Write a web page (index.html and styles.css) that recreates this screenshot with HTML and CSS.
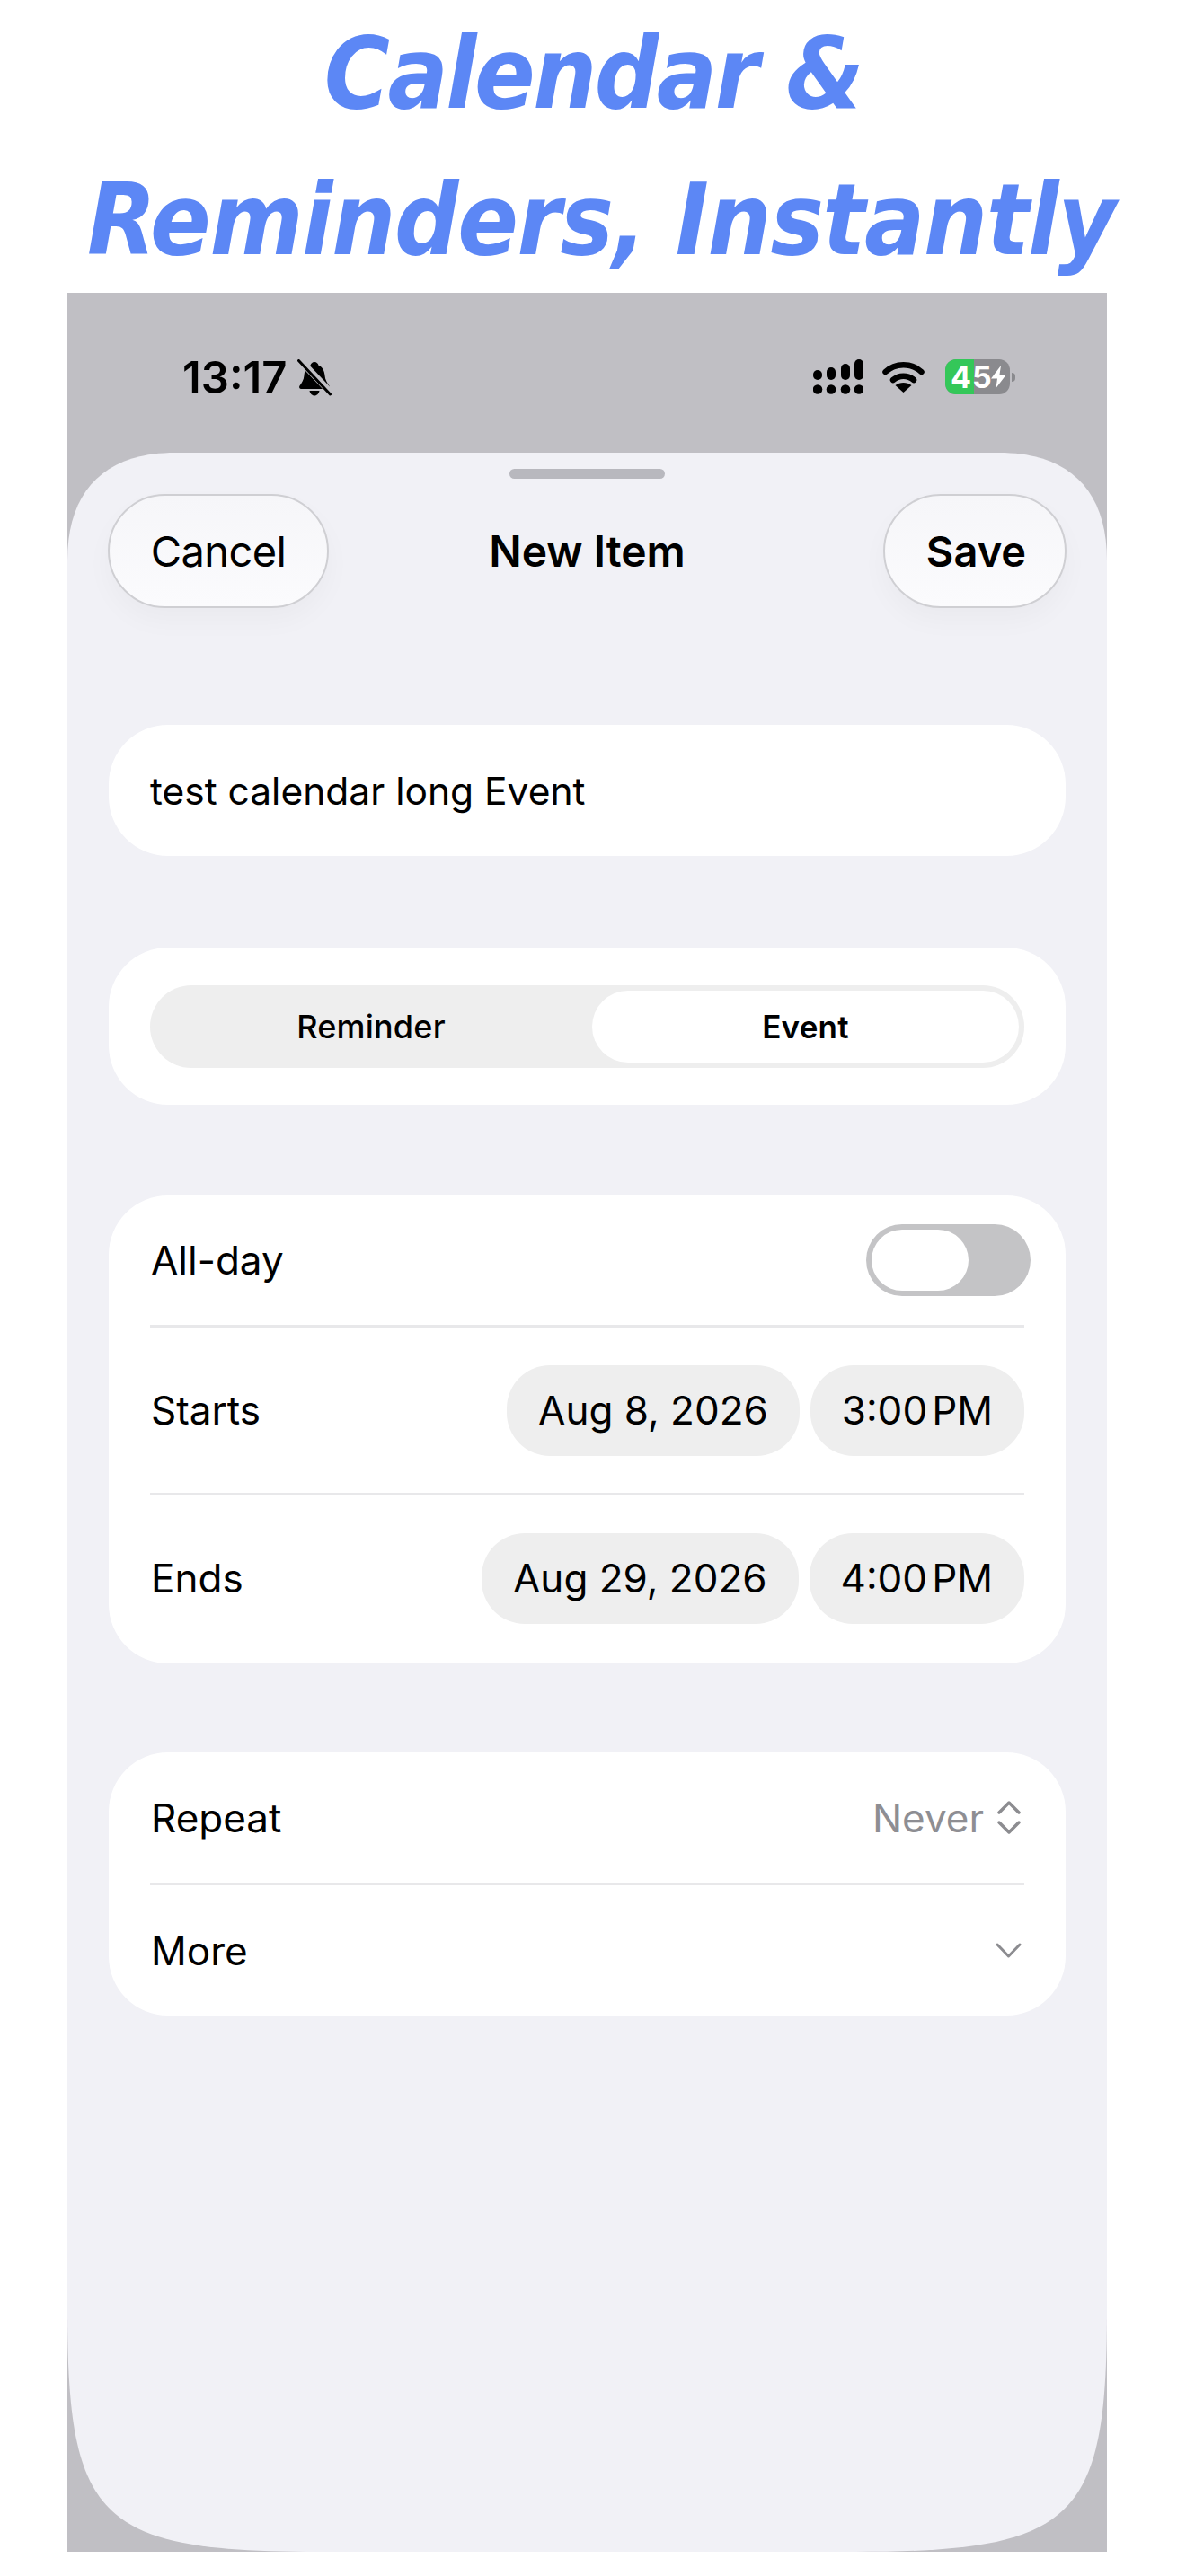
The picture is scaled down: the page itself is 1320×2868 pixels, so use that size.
FILE: index.html
```html
<!DOCTYPE html>
<html lang="en">
<head>
    <meta charset="UTF-8">
    <meta name="viewport" content="width=device-width, initial-scale=1.0">
    <title>Calendar &amp; Reminders, Instantly</title>
    <link rel="stylesheet" href="styles.css">
</head>
<body>

<h1 class="headline"><span class="headline-first">Calendar &amp;</span><br><span class="headline-second">Reminders, Instantly</span></h1>

<div class="phone">
    <div class="status-bar">
        <div class="status-left">
            <span class="status-time">13:17</span>
            <svg class="icon-bell" viewBox="0 0 38 41">
                <path d="M19 3c2.500 0 4 1.800 4.500 3.800C28 8.500 30 13 30.500 18c.4 5 2.500 8 5 11.500 1 1.500.3 3.500-1.800 3.500H4.300c-2.100 0-2.800-2-1.800-3.500C5 26 7.100 23 7.500 18 8 13 10 8.500 14.500 6.800 15 4.800 16.500 3 19 3z" fill="#000"/>
                <path d="M13.500 35h11c-.5 3-2.800 5.500-5.500 5.500s-5-2.500-5.500-5.500z" fill="#000"/>
                <path d="M1 -1L38 38" stroke="#c0bfc4" stroke-width="7.500"/>
                <path d="M1.500 1.500L36.500 39" stroke="#000" stroke-width="3" stroke-linecap="round"/>
            </svg>
        </div>
        <div class="status-right">
            <svg class="icon-signal" viewBox="0 0 56 39">
                <rect x="0" y="12" width="10" height="11" rx="5"/>
                <rect x="15" y="9" width="10" height="14" rx="5"/>
                <rect x="31" y="5" width="10" height="18" rx="5"/>
                <rect x="46" y="0" width="10" height="23" rx="5"/>
                <circle cx="5" cy="33.500" r="5.300"/>
                <circle cx="20" cy="33.500" r="5.300"/>
                <circle cx="36" cy="33.500" r="5.300"/>
                <circle cx="51" cy="33.500" r="5.300"/>
            </svg>
            <svg class="icon-wifi" viewBox="0 0 47 35">
                <path d="M3.500 12C14.500 1.500 32.500 1.500 43.500 12" fill="none" stroke="#000" stroke-width="6.500" stroke-linecap="round"/>
                <path d="M12 21c6.500-5.800 16.500-5.800 23 0" fill="none" stroke="#000" stroke-width="6.500" stroke-linecap="round"/>
                <path d="M23.500 35L14.500 27c5-4 13-4 18 0z" fill="#000"/>
            </svg>
            <div class="battery">
                <div class="battery-body">
                    <span class="battery-level"></span>
                    <span class="battery-text">45</span>
                    <svg class="icon-bolt" viewBox="0 0 17 25">
                        <path d="M11 0L0 14.500h7L5.500 25 17 10H9.500z" fill="#fff"/>
                    </svg>
                </div>
                <span class="battery-nub"></span>
            </div>
        </div>
    </div>

    <div class="sheet">
        <div class="grabber"></div>

        <div class="nav">
            <button class="nav-btn nav-cancel">Cancel</button>
            <div class="nav-title">New Item</div>
            <button class="nav-btn nav-save">Save</button>
        </div>

        <div class="card title-field">test calendar long Event</div>

        <div class="card segment-card">
            <div class="segment">
                <div class="segment-item">Reminder</div>
                <div class="segment-item segment-active">Event</div>
            </div>
        </div>

        <div class="card dates-card">
            <div class="row row-allday">
                <span>All-day</span>
                <div class="toggle"><div class="toggle-knob"></div></div>
            </div>
            <div class="divider"></div>
            <div class="row row-date">
                <span>Starts</span>
                <div class="chips">
                    <span class="chip">Aug 8, 2026</span>
                    <span class="chip">3:00<span class="thin-gap"></span>PM</span>
                </div>
            </div>
            <div class="divider"></div>
            <div class="row row-date">
                <span>Ends</span>
                <div class="chips">
                    <span class="chip">Aug 29, 2026</span>
                    <span class="chip">4:00<span class="thin-gap"></span>PM</span>
                </div>
            </div>
        </div>

        <div class="card options-card">
            <div class="row row-repeat">
                <span>Repeat</span>
                <div class="row-value">
                    <span>Never</span>
                    <svg class="icon-updown" viewBox="0 0 26 37">
                        <path d="M2 13L13 2l11 11M2 24l11 11 11-11" fill="none" stroke="#8c8c90" stroke-width="3.500" stroke-linecap="round" stroke-linejoin="round"/>
                    </svg>
                </div>
            </div>
            <div class="divider"></div>
            <div class="row row-more">
                <span>More</span>
                <svg class="icon-chevron" viewBox="0 0 29 17">
                    <path d="M2 2l12.500 13L27 2" fill="none" stroke="#8c8c90" stroke-width="3" stroke-linecap="round" stroke-linejoin="round"/>
                </svg>
            </div>
        </div>
    </div>
</div>

</body>
</html>
```
FILE: styles.css
```css
* {
    box-sizing: border-box;
}

body {
    margin: 0;
    background-color: #ffffff;
    font-family: 'Inter', 'Liberation Sans', sans-serif;
    color: #000;
}

.headline {
    margin: 0;
    height: 326px;
    text-align: center;
    font-family: 'DejaVu Sans', sans-serif;
    font-stretch: condensed;
    font-style: italic;
    font-weight: bold;
    font-size: 111px;
    letter-spacing: -1.300px;
    line-height: 163px;
    color: #5c87f5;
}

.headline-first {
    letter-spacing: -2.500px;
}

.headline-second {
    position: relative;
    left: 9px;
}

.phone {
    width: 1157px;
    height: 2515px;
    margin-left: 75px;
    background-color: #c0bfc4;
    display: flex;
    flex-direction: column;
}

.status-bar {
    height: 178px;
    flex-shrink: 0;
    padding: 74px 102px 0 128px;
    display: flex;
    justify-content: space-between;
    align-items: flex-start;
}

.status-left {
    display: flex;
    align-items: center;
    gap: 12px;
    height: 41px;
}

.status-time {
    font-size: 49px;
    font-weight: 600;
}

.icon-bell {
    width: 38px;
    height: 41px;
}

.status-right {
    display: flex;
    align-items: center;
    height: 39px;
}

.icon-signal {
    width: 56px;
    height: 39px;
    margin-right: 21px;
}

.icon-wifi {
    width: 47px;
    height: 35px;
    margin-right: 23px;
}

.battery {
    display: flex;
    align-items: center;
    gap: 2px;
}

.battery-body {
    position: relative;
    width: 72px;
    height: 39px;
    border-radius: 12px;
    background-color: #8a8a8e;
    overflow: hidden;
}

.battery-level {
    position: absolute;
    left: 0;
    top: 0;
    bottom: 0;
    width: 32px;
    background-color: #34c759;
}

.battery-text {
    position: absolute;
    left: 6px;
    top: 0;
    line-height: 39px;
    font-size: 34px;
    font-weight: 700;
    letter-spacing: 1px;
    color: #fff;
}

.icon-bolt {
    position: absolute;
    left: 51px;
    top: 7px;
    width: 17px;
    height: 25px;
}

.battery-nub {
    width: 4px;
    height: 10px;
    border-radius: 0 4px 4px 0;
    background-color: #8a8a8e;
}

.sheet {
    flex: 1;
    padding: 18px 46px 0 46px;
    background-color: #f1f1f6;
    clip-path: path("M0 120C0 42 42 0 120 0H1037C1115 0 1157 42 1157 120V2067C1157 2302 1122 2337 877 2337H280C35 2337 0 2302 0 2067Z");
}

.grabber {
    width: 173px;
    height: 11px;
    margin: 0 auto 17px;
    border-radius: 6px;
    background-color: #b8b8be;
}

.nav {
    display: grid;
    grid-template-columns: 1fr auto 1fr;
    align-items: center;
    height: 127px;
    margin: 0 -1px 130px -1px;
}

.nav-btn {
    height: 127px;
    border: 2px solid #cfcfd3;
    border-radius: 64px;
    background: linear-gradient(#f6f6f9, #fbfbfd);
    box-shadow: 0 14px 30px rgba(0, 0, 0, 0.03);
    font-family: inherit;
    font-size: 47px;
    color: #000;
    padding: 0;
}

.nav-cancel {
    width: 246px;
    letter-spacing: -0.6px;
}

.nav-save {
    width: 204px;
    padding-left: 3px;
    font-weight: 600;
    justify-self: end;
}

.nav-title {
    font-size: 48px;
    font-weight: 600;
}

.card {
    background-color: #ffffff;
    border-radius: 66px;
}

.title-field {
    height: 146px;
    padding-left: 46px;
    margin-bottom: 102px;
    display: flex;
    align-items: center;
    font-size: 42.500px;
}

.segment-card {
    height: 175px;
    padding: 42px 46px 0;
    margin-bottom: 101px;
}

.segment {
    height: 92px;
    padding: 6px;
    border-radius: 46px;
    background-color: #eeeeee;
    display: flex;
}

.segment-item {
    flex: 1;
    display: flex;
    align-items: center;
    justify-content: center;
    margin-left: -6px;
    border-radius: 40px;
    font-size: 36px;
    font-weight: 500;
    letter-spacing: 0.2px;
}

.segment-active {
    margin-left: 0;
    background-color: #ffffff;
    font-size: 35px;
    font-weight: 600;
    flex: none;
    width: 475px;
}

.dates-card {
    height: 521px;
    margin-bottom: 99px;
}

.options-card {
    height: 293px;
}

.row {
    display: flex;
    justify-content: space-between;
    align-items: center;
    padding: 0 46px 0 47px;
    font-size: 44px;
}

.row-allday {
    height: 144px;
}

.row-date {
    height: 184px;
}

.row-repeat {
    height: 145px;
}

.row-more {
    height: 145px;
}

.divider {
    height: 3px;
    margin: 0 46px;
    background-color: #e8e8ea;
}

.toggle {
    width: 183px;
    height: 80px;
    margin-right: -7px;
    padding: 6px;
    border-radius: 40px;
    background-color: #c4c4c6;
}

.toggle-knob {
    width: 108px;
    height: 68px;
    border-radius: 34px;
    background-color: #ffffff;
}

.chips {
    display: flex;
    gap: 12px;
}

.chip {
    height: 101px;
    padding: 0 35px;
    display: flex;
    align-items: center;
    border-radius: 48px;
    background-color: #eeeeee;
    font-size: 44px;
}

.thin-gap {
    width: 5px;
}

.row-value {
    display: flex;
    align-items: center;
    gap: 15px;
    color: #8e8e93;
}

.icon-updown {
    width: 26px;
    height: 37px;
    margin-right: 4px;
}

.icon-chevron {
    width: 29px;
    height: 17px;
    margin-right: 3px;
}
```
